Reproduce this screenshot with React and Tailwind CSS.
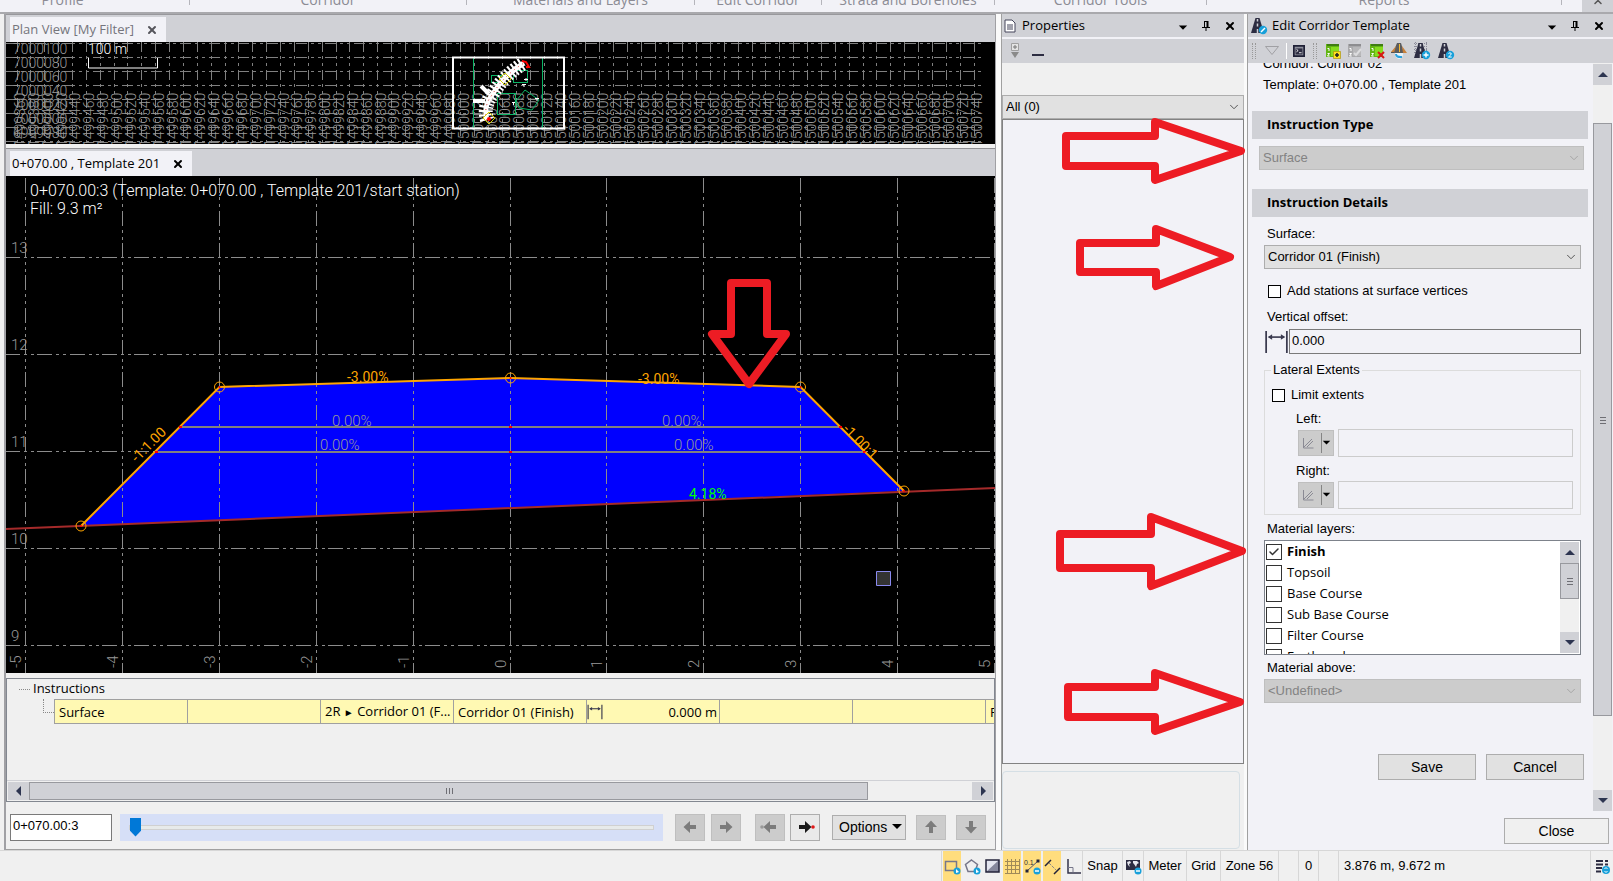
import React from 'react';
import { ChevronDown, ChevronUp, Check, X } from 'lucide-react';

const ribbonGroups = [
  { label: 'Profile', width: 'w-[254px]' },
  { label: 'Corridor', width: 'w-[277px]' },
  { label: 'Materials and Layers', width: 'w-[228px]' },
  { label: 'Edit Corridor', width: 'w-[127px]' },
  { label: 'Strata and Boreholes', width: 'w-[173px]' },
  { label: 'Corridor Tools', width: 'w-[212px]' },
  { label: 'Reports', width: 'w-[355px]' },
];

const layers = ['Finish', 'Topsoil', 'Base Course', 'Sub Base Course', 'Filter Course', 'Earthwork'];

/* ---------- Icons ---------- */

const Triangle = ({ dir = 'down', className = '' }) => {
  const shapes = {
    down: 'M1 3h10l-5 5z',
    up: 'M1 8h10l-5-5z',
    left: 'M8 1v10l-5-5z',
    right: 'M4 1v10l5-5z',
  };
  return (
    <svg viewBox="0 0 12 12" className={`w-3 h-3 shrink-0 ${className}`} fill="currentColor">
      <path d={shapes[dir]} />
    </svg>
  );
};

const PinIcon = () => (
  <svg viewBox="0 0 10 12" className="w-[10px] h-3" fill="none" stroke="#000">
    <path d="M3 1.5h4M3.5 1v6M1 7.5h8M5 8v3" />
    <path d="M6.5 1v6" strokeWidth="2" />
  </svg>
);

const RoadIcon = ({ badge, grid }) => (
  <svg viewBox="0 0 18 18" className="w-[18px] h-[18px] shrink-0">
    {grid && <path d="M1 1.500h14M1 4.500h14M1 7.500h14M1 10.500h14M2.500 0v14M13.500 0v14" stroke="#8b8b99" strokeDasharray="1 1" />}
    <path d="M5.500 1h4l4.500 15H1z" fill="#2d2d42" />
    <path d="M7.500 2v2.500M7.500 6.500v3M7.500 12v4" stroke="#d0d1d6" strokeWidth="1.500" />
    <circle cx="13" cy="13" r="4.200" fill="#18a0da" />
    {badge === 'edit' && <path d="M11 15l4-4" stroke="#fff" strokeWidth="1.500" />}
    {badge === 'plus' && <path d="M13 10.500v5M10.500 13h5" stroke="#fff" strokeWidth="1.400" />}
    {badge === 'two' && <path d="M11.500 11.500q1.500-1.500 2.800 0q.3 1-2.800 3.500h3.200" stroke="#fff" fill="none" />}
  </svg>
);

const ListIcon = ({ kind }) => {
  const off = kind === 'edit';
  return (
    <svg viewBox="0 0 16 16" className="w-4 h-4">
      <path d="M1 1h13v13H1z" fill={off ? '#a9a9ab' : '#62b512'} />
      <path d="M2 1h12v2H2z" fill={off ? '#8d8d90' : '#3f7d12'} />
      <path d="M6 4h8v9H6z" fill={off ? '#b8b8ba' : '#86dc1e'} />
      <path d="M2.500 5.500h1.500v2.500M2.500 10.500h2l-2 2.500h2.200" stroke="#fff" fill="none" />
      {kind === 'add' && (
        <>
          <path d="M8.500 8.500h7v7h-7z" fill="#ffdf20" stroke="#a58c00" strokeWidth="0.600" />
          <path d="M12 10v4M10 12h4" stroke="#222" strokeWidth="1.600" />
        </>
      )}
      {kind === 'edit' && <path d="M7 10l2 2 5-6" stroke="#dcdcde" strokeWidth="2" fill="none" />}
      {kind === 'remove' && <path d="M9 9l6 6M15 9l-6 6" stroke="#d81616" strokeWidth="2" />}
    </svg>
  );
};

const RoadTurnIcon = () => (
  <svg viewBox="0 0 16 16" className="w-4 h-4">
    <path d="M6 0h4l3 10H2z" fill="#5c5c5e" />
    <path d="M5 3L0 9l3 1zM11 3l5 7h-4z" fill="#c9803a" />
    <path d="M0 9h3v1H0z" fill="#555" />
    <path d="M8.500 1v8" stroke="#f7b92c" />
    <path d="M4 10h8v2q-1 3.500-4 4q-3-.5-4-4z" fill="#e8f4fb" />
    <path d="M5 11q0 3.500 6 3" stroke="#2aa2df" strokeWidth="2" fill="none" />
  </svg>
);

const OffsetIcon = ({ className }) => (
  <svg viewBox="0 0 22 22" className={className} fill="none" stroke="#3b3b4f">
    <path d="M1.500 1v20M20.500 1v20" strokeWidth="1.600" />
    <path d="M4 6.500h14" strokeWidth="1.500" />
    <path d="M3 6.500l4-2.500v5zM19 6.500l-4-2.500v5z" fill="#3b3b4f" stroke="none" />
  </svg>
);

const ArrowGlyph = ({ dir, dot, color = '#7c7c7c' }) => {
  const rotate = { right: 0, down: 90, left: 180, up: 270 }[dir];
  return (
    <svg viewBox="0 0 20 16" className="w-5 h-4" fill={color}>
      <g transform={`rotate(${rotate} 10 8)`}>
        <path d="M4 6h6V2l6.500 6-6.500 6v-4H4z" />
      </g>
      {dot && <circle cx={dir === 'left' ? 2 : 18} cy="8" r="1.800" fill={dot} />}
    </svg>
  );
};

const Grip = ({ vertical }) => (
  <svg viewBox="0 0 8 8" className="w-2 h-2" stroke="#6f6f75">
    {vertical ? <path d="M1 1.500h6M1 4.500h6M1 7.500h6" /> : <path d="M1.500 1v6M4.500 1v6M7.500 1v6" />}
  </svg>
);

/* ---------- Shared controls ---------- */

const SelectBox = ({ id, label, value, disabled, className = '' }) => (
  <div className={`relative h-6 ${className}`}>
    <select
      id={id}
      aria-label={label}
      disabled={disabled}
      defaultValue={value}
      className="w-full h-full appearance-none border border-[#adadad] bg-[#e1e1e1] pl-[3px] pr-6 text-black disabled:bg-[#cccccc] disabled:border-[#bfbfbf] disabled:text-[#838383] disabled:opacity-100"
    >
      <option>{value}</option>
    </select>
    <ChevronDown
      className={`absolute right-[3px] top-[5px] w-[14px] h-[14px] pointer-events-none ${disabled ? 'text-[#a0a0a0]' : 'text-[#444]'}`}
      strokeWidth={1.5}
    />
  </div>
);

const PanelHeader = ({ icon, title }) => (
  <div className="flex items-center h-[23px] shrink-0 bg-[#d0d1d6] pl-[2px] pr-2 text-[13px]">
    <span className="flex w-[18px]">{icon}</span>
    <h2 className="flex-1 ml-1 whitespace-nowrap">{title}</h2>
    <button type="button" aria-label="Panel menu" className="mr-[13px]"><Triangle className="mt-1 w-[10px]" /></button>
    <button type="button" aria-label="Pin panel" className="mr-[13px]"><PinIcon /></button>
    <button type="button" aria-label="Close panel"><X className="w-3 h-3" strokeWidth={4} /></button>
  </div>
);

const DocTab = ({ title, active, className }) => (
  <div className={`inline-flex items-center h-[25px] bg-[#f2f2f7] pl-[2px] pr-2 text-[13px] ${active ? 'text-black' : 'text-[#75757c]'} ${className}`}>
    <span className="flex-1 whitespace-nowrap">{title}</span>
    <button type="button" aria-label={`Close ${title}`}>
      <X className={`w-3 h-3 ${active ? 'text-black' : 'text-[#55555b]'}`} strokeWidth={4} />
    </button>
  </div>
);

/* ---------- Plan view ---------- */

const PlanView = () => {
  const columns = Array.from({ length: 70 }, (_, i) => 11 + i * 13.87);
  const rows = Array.from({ length: 8 }, (_, i) => 1.5 + i * 14);
  return (
    <svg className="block w-full h-[102px] shrink-0 bg-black font-['Roboto',sans-serif] font-light" fill="none">
      <g stroke="#808080" shapeRendering="crispEdges">
        {columns.map((x) => (
          <path key={x} d={`M${x} 0V102`} strokeDasharray="10 4 3 4 3 4" />
        ))}
        {rows.map((y) => (
          <path key={y} d={`M0 ${y}H979`} strokeDasharray="11 4 3 4 3 4" />
        ))}
      </g>
      <g fill="#999" fontSize="14">
        {['7000100', '7000080', '7000060', '7000040', '7000020', '7000000', '6999980'].map((label, i) => (
          <text key={label} x="7" y={12 + i * 14}>{label}</text>
        ))}
        {Array.from({ length: 70 }, (_, i) => (
          <text key={i} transform={`translate(${19 + i * 13.87} 105) rotate(-90)`}>{1499360 + i * 20}</text>
        ))}
      </g>
      <text x="82" y="12" fill="#fff" fontSize="14">100 m</text>
      <path d="M82.500 16v10h69v-10" stroke="#fff" />
      <g stroke="#0bb565" shapeRendering="crispEdges">
        <path d="M467.500 15v71M536.500 15v71" />
        <path d="M485 33h12v7h-12zM507 28h14v12h-14zM491 51h18v21h-18z" />
      </g>
      <path d="M510 59l9-11 14 10-7 10-13-2z" stroke="#0bb565" />
      <path d="M447 15.500h111v71H447z" stroke="#fff" strokeWidth="2" />
      <path d="M481 78q-4-14 5-25q12-20 32-32" stroke="#fff" strokeWidth="5" />
      <path d="M481 78q-4-14 5-25q12-20 32-32" stroke="#fff" strokeWidth="14" strokeDasharray="2 2" />
      <path d="M481 78q-4-14 5-25q12-20 32-32" stroke="#e02020" strokeDasharray="1 4" />
      <path d="M467 59h12M475 44l8 8" stroke="#fff" strokeWidth="4" />
      <path d="M499 31l6 6-6 6-6-6zM483 70l6 6-6 6-6-6z" stroke="#d6d000" />
      <path d="M516 19l4 1 3 5-3 0" stroke="#f00" strokeWidth="2" />
      <circle cx="483" cy="77" r="2" fill="#f00" />
      <path d="M520 36v3M518 37.500h4M516 42.500h4M518 42v3M506 60.500h3M507.500 60v3M529 56.500h4M531 56v3" stroke="#fff" />
    </svg>
  );
};

/* ---------- Cross section ---------- */

const CrossSection = () => {
  const columns = [19.5, 116.5, 213.5, 310.5, 407.5, 504.5, 600.5, 697.5, 794.5, 891.5, 988.5];
  const rows = [81.5, 178.5, 275.5, 372.5, 469.5];
  const nodes = [[75, 350], [213.5, 211], [504.5, 202], [794.5, 211], [898, 315]];
  return (
    <svg className="block w-full flex-1 min-h-0 bg-black font-['Roboto',sans-serif]" fill="none">
      <path d="M75 350L213.500 211 504.500 202 794.500 211 898 315z" fill="#0000ff" />
      <g stroke="#8c8c8c" shapeRendering="crispEdges">
        {columns.map((x) => (
          <path key={x} d={`M${x} 2.300V497`} strokeDasharray="15 4 3 4 3 3.330" />
        ))}
        {rows.map((y) => (
          <path key={y} d={`M-1 ${y}H989`} strokeDasharray="15 4 3 4 3 3.330" />
        ))}
      </g>
      <path d="M175 251H834M150 276H858" stroke="#808080" strokeWidth="2" />
      <path d="M0 353L989 312" stroke="#a52a2a" strokeWidth="2" />
      <path d="M75 350L213.500 211 504.500 202 794.500 211 898 315" stroke="#ffa500" strokeWidth="2" />
      {nodes.map(([x, y]) => (
        <g key={x}>
          <circle cx={x} cy={y} r="5" stroke="#ffa500" />
          <circle cx={x} cy={y} r="1" fill="#f00" />
        </g>
      ))}
      <path d="M173 251h3M149 276h3M503 251h3M503 276h3M833 251h3M857 276h3" stroke="#f00" strokeWidth="2" />

      <g fill="#999" fontSize="15" className="font-light">
        {rows.map((y, i) => (
          <text key={y} x="5" y={y - 5}>{13 - i}</text>
        ))}
        {columns.map((x, i) => (
          <text key={x} transform={`translate(${x - 5} 492) rotate(-90)`}>{i - 5}</text>
        ))}
        <text x="326" y="250">0.00%</text>
        <text x="656" y="250">0.00%</text>
        <text x="314" y="274">0.00%</text>
        <text x="668" y="274">0.00%</text>
      </g>
      <g fill="#ffa500" fontSize="14">
        <text x="341" y="206">-3.00%</text>
        <text x="632" y="208">-3.00%</text>
        <text transform="translate(131 287) rotate(-45)">-1:1.00</text>
        <text transform="translate(836 254) rotate(45)">-1.00:1</text>
      </g>
      <text x="683" y="323" fill="#00ff00" fontSize="14">4.18%</text>
      <g fill="#fff" fontSize="16" className="font-light">
        <text x="24" y="20">0+070.00:3 (Template: 0+070.00 , Template 201/start station)</text>
        <text x="24" y="38">Fill: 9.3 m²</text>
      </g>
      <path d="M870.500 395.500h14v14h-14z" fill="#333" stroke="#8a8af0" />
      <path
        d="M725 107h36v51h19L743 208 706 158h19z"
        stroke="#ed1c24"
        strokeWidth="8"
        strokeLinejoin="round"
      />
    </svg>
  );
};

/* ---------- Instruction tree ---------- */

const InstructionTree = () => (
  <div className="flex flex-col h-[124px] shrink-0 border border-[#828790] bg-[#f0f0f0] text-[13px]">
    <div className="flex items-center h-5 pl-3">
      <span className="w-[11px] border-t border-dotted border-[#888] mr-[3px]" />
      <span>Instructions</span>
    </div>
    <div className="flex pl-9 overflow-hidden">
      <span className="w-[11px] h-[14px] shrink-0 border-l border-b border-dotted border-[#888]" />
      <table className="table-fixed w-[1065px] shrink-0 border-collapse bg-[#fff9b3] leading-5">
        <tbody>
          <tr className="h-6 [&>td]:border [&>td]:border-[#a0a0a0] [&>td]:pl-1 [&>td]:pr-[2px] [&>td]:whitespace-nowrap [&>td]:overflow-hidden">
            <td>Surface</td>
            <td></td>
            <td>2R <span className="text-[10px]">►</span> Corridor 01 (F...</td>
            <td>Corridor 01 (Finish)</td>
            <td>
              <div className="flex items-center justify-between">
                <OffsetIcon className="w-4 h-4 -ml-1" />
                <span>0.000 m</span>
              </div>
            </td>
            <td></td>
            <td></td>
            <td>Finish</td>
          </tr>
        </tbody>
      </table>
    </div>
    <div className="flex mt-auto h-[21px] bg-[#f0f0f0] p-px border-t border-[#d0d1d6] text-[#2d3550]">
      <button type="button" aria-label="Scroll left" className="flex items-center justify-center w-[21px] bg-[#d0d1d6]"><Triangle dir="left" /></button>
      <div className="flex-1">
        <div className="flex items-center justify-center w-[89%] h-full border border-[#98999e] bg-[#d0d1d6]"><Grip /></div>
      </div>
      <button type="button" aria-label="Scroll right" className="flex items-center justify-center w-[21px] bg-[#d0d1d6]"><Triangle dir="right" /></button>
    </div>
  </div>
);

const navButton = "flex items-center justify-center w-[30px] shrink-0 border border-[#bfbfbf] bg-[#cccccc]";

const StationBar = () => (
  <div className="flex items-center h-12 shrink-0 pt-1 pb-[1px] pl-1 pr-[9px] border-b border-[#a0a0a0] font-['Liberation_Sans',Arial,sans-serif]">
    <input aria-label="Station" defaultValue="0+070.00:3" className="w-[102px] h-[27px] border border-[#7a7a7a] bg-white pl-[2px] pb-1 text-[13px]" />
    <div className="flex-1 flex items-center h-[27px] ml-2 mr-3 px-[9px] bg-[#d6dff7]">
      <input
        type="range"
        aria-label="Station position"
        min="0"
        max="100"
        defaultValue="0"
        className="w-full h-[5px] appearance-none bg-[#e7eaea] border border-[#d0d0d0] [&::-webkit-slider-thumb]:appearance-none [&::-webkit-slider-thumb]:w-[11px] [&::-webkit-slider-thumb]:h-[19px] [&::-webkit-slider-thumb]:bg-[#0078d7] [&::-webkit-slider-thumb]:[clip-path:polygon(0_0,100%_0,100%_70%,50%_100%,0_70%)]"
      />
    </div>
    <button type="button" disabled aria-label="Previous station" className={`${navButton} h-[27px]`}><ArrowGlyph dir="left" /></button>
    <button type="button" disabled aria-label="Next station" className={`${navButton} h-[27px] ml-[6px]`}><ArrowGlyph dir="right" /></button>
    <button type="button" disabled aria-label="Previous node" className={`${navButton} h-[27px] ml-[14px]`}><ArrowGlyph dir="left" dot="#999" /></button>
    <button type="button" aria-label="Next node" className="flex items-center justify-center w-[30px] h-[27px] ml-[5px] border border-[#adadad] bg-[#e9e9e9]"><ArrowGlyph dir="right" dot="#e01818" color="#1a1a1a" /></button>
    <button type="button" className="flex items-center justify-between w-[74px] h-[25px] ml-3 pl-[6px] pr-[2px] border border-[#adadad] bg-[#e1e1e1] text-[14px]">
      Options <Triangle />
    </button>
    <button type="button" disabled aria-label="Move up" className={`${navButton} h-[25px] ml-[10px]`}><ArrowGlyph dir="up" /></button>
    <button type="button" disabled aria-label="Move down" className={`${navButton} h-[25px] ml-[10px]`}><ArrowGlyph dir="down" /></button>
  </div>
);

/* ---------- Properties ---------- */

const PropertiesPanel = () => (
  <aside className="relative flex flex-col w-[243px] shrink-0 border-l border-[#a0a0a0] bg-[#f0f0f0]">
    <div className="[&_h2]:ml-0">
      <PanelHeader
        title="Properties"
        icon={
          <svg viewBox="0 0 12 14" className="w-3 h-[14px]" fill="#fff" stroke="#44445a">
            <path d="M1 1h7l3 3v9H1zM3 6h6M3 8h6M3 10h6" />
          </svg>
        }
      />
    </div>
    <div className="flex items-center gap-3 h-[26px] shrink-0 border-t-2 border-[#f2f2f7] bg-[#d0d1d6] pl-2">
      <svg viewBox="0 0 10 18" className="w-[10px] h-[18px]">
        <path d="M1.500 1.500h7v7h-7z" fill="#e4e4e4" stroke="#a0a0a0" />
        <path d="M5 3v4M3 5h4" stroke="#777" />
        <path d="M1 10h8l-4 6z" fill="#8a8a8a" />
      </svg>
      <span className="w-3 h-[2px] mt-2 bg-[#2d2d42]" />
    </div>
    <SelectBox label="Selected objects" value="All (0)" className="mt-8 font-['Liberation_Sans',Arial,sans-serif] text-[13px]" />
    <div className="flex-1 border border-[#828282] bg-[#f2f2f7]" />
    <div className="h-[78px] shrink-0 mt-[7px] mb-px mr-1 rounded border border-[#d5dfe5]" />

    {/* Callout arrows pointing into the template panel */}
    <svg className="absolute inset-0 w-full h-full overflow-visible pointer-events-none z-10" fill="none" stroke="#ed1c24" strokeWidth="8" strokeLinejoin="round">
      <path d="M64 122h89v-14l86 29-86 29v-14H64z" />
      <path d="M78 229h76v-14l74 28-74 29v-14H78z" />
      <path d="M58 520h91v-17l91 34-91 35v-18H58z" />
      <path d="M66 673h87v-14l85 29-85 29v-14H66z" />
    </svg>
  </aside>
);

/* ---------- Edit corridor template ---------- */

const SectionTitle = ({ children, className = '' }) => (
  <h3 className={`flex items-center h-7 pl-[15px] mr-1 bg-[#d0d1d6] font-bold font-['Open_Sans',sans-serif] text-[13px] ${className}`}>
    {children}
  </h3>
);

const ExtentRow = ({ id, label, className = '' }) => (
  <div className={`pl-[31px] pr-[7px] ${className}`}>
    <label htmlFor={id} className="block leading-5">{label}</label>
    <div className="flex items-center gap-1 h-7 ml-[2px]">
      <button type="button" disabled aria-label={`${label} point options`} className="flex items-center justify-between w-9 h-[26px] shrink-0 border border-[#bfbfbf] bg-[#cccccc] pl-[3px] pr-[2px]">
        <svg viewBox="0 0 12 12" className="w-3 h-3" fill="none" stroke="#8a8a94">
          <path d="M1.500 1v10h10M2 10l8-8M5 10l6-6" />
        </svg>
        <span className="flex items-center border-l border-[#858585] h-5 text-black"><Triangle className="w-[9px]" /></span>
      </button>
      <input id={id} disabled className="flex-1 min-w-0 h-7 border border-[#cccccc] bg-[#f2f2f7]" />
    </div>
  </div>
);

const MaterialLayers = () => (
  <div className="flex h-[115px] border border-[#7d828b] bg-white overflow-hidden">
    <ul className="flex-1 pl-px font-['Open_Sans',sans-serif] overflow-hidden">
      {layers.map((name, i) => (
        <li key={name} className="h-[21px]">
          <label className={`flex items-center h-full ${i === 0 ? 'font-bold' : ''}`}>
            <span className="relative w-4 h-4 mr-[5px]">
              <input type="checkbox" defaultChecked={i === 0} className="peer block w-4 h-4 appearance-none border border-[#333] bg-white" />
              <Check className="absolute inset-0 w-4 h-4 p-[2px] text-[#333] opacity-0 peer-checked:opacity-100" strokeWidth={3} />
            </span>
            {name}
          </label>
        </li>
      ))}
    </ul>
    <div className="flex flex-col w-[19px] mr-px my-px bg-[#f0f0f0] text-[#2d3550]">
      <button type="button" aria-label="Scroll layers up" className="flex items-center justify-center h-[21px] bg-[#d0d1d6]"><Triangle dir="up" /></button>
      <div className="flex items-center justify-center h-9 border border-[#98999e] bg-[#d0d1d6]"><Grip vertical /></div>
      <button type="button" aria-label="Scroll layers down" className="flex items-center justify-center h-[21px] mt-auto bg-[#d0d1d6]"><Triangle /></button>
    </div>
  </div>
);

const formButton = 'border border-[#adadad] bg-[#e1e1e1] h-[26px] w-[98px] text-[14px]';

const TemplateForm = () => (
  <form className="flex-1 min-w-0 pl-1 overflow-hidden">
    <p className="pl-[11px] -mt-[10px] leading-[21px]">Corridor: Corridor 02</p>
    <p className="pl-[11px] leading-[21px]">Template: 0+070.00 , Template 201</p>
    <SectionTitle className="mt-4">Instruction Type</SectionTitle>
    <SelectBox label="Instruction type" value="Surface" disabled className="mt-[7px] ml-[7px] mr-2" />
    <SectionTitle className="mt-[19px]">Instruction Details</SectionTitle>

    <div className="pl-3 pr-[11px]">
      <label htmlFor="surface" className="block mt-[7px] pl-[3px] leading-5">Surface:</label>
      <SelectBox id="surface" value="Corridor 01 (Finish)" className="mt-px" />
      <label className="flex items-center h-5 mt-3 pl-1">
        <input type="checkbox" className="w-[13px] h-[13px] mr-[6px] appearance-none border border-black bg-white" />
        Add stations at surface vertices
      </label>
      <label htmlFor="offset" className="block mt-[6px] pl-[3px] leading-5">Vertical offset:</label>
      <div className="flex items-center h-[25px] mt-[2px]">
        <OffsetIcon className="w-[25px] h-6" />
        <input id="offset" defaultValue="0.000" className="flex-1 min-w-0 h-[25px] border border-[#7a7a7a] bg-[#f2f2f7] pl-[2px] pb-[3px]" />
      </div>

      <fieldset className="mt-[6px] pb-[5px] border border-[#dcdcdc] min-w-0">
        <legend className="ml-[6px] px-[2px] leading-5">Lateral Extents</legend>
        <label className="flex items-center h-5 mt-[5px] pl-[7px]">
          <input type="checkbox" className="w-[13px] h-[13px] mr-[6px] appearance-none border border-black bg-white" />
          Limit extents
        </label>
        <ExtentRow id="extent-left" label="Left:" className="mt-1" />
        <ExtentRow id="extent-right" label="Right:" className="mt-1" />
      </fieldset>

      <p className="mt-1 mb-px pl-[3px] leading-5">Material layers:</p>
      <MaterialLayers />
      <label htmlFor="material-above" className="block mt-[3px] pl-[3px] leading-5">Material above:</label>
      <SelectBox id="material-above" value="<Undefined>" disabled className="mt-px" />
    </div>
    <div className="flex justify-end gap-[10px] mt-[51px] pr-2">
      <button type="button" className={formButton}>Save</button>
      <button type="button" className={formButton}>Cancel</button>
    </div>
  </form>
);

const TemplatePanel = () => (
  <aside className="flex flex-col w-[366px] shrink-0 border-l border-[#a0a0a0] bg-[#f2f2f7]">
    <PanelHeader title="Edit Corridor Template" icon={<RoadIcon badge="edit" />} />
    <div className="flex items-center h-[26px] shrink-0 border-t-2 border-[#f2f2f7] bg-[#d0d1d6] pl-1">
      <span className="w-1 h-4 border-x border-dotted border-[#999]" />
      <svg viewBox="0 0 16 12" className="w-4 h-3 ml-2" fill="none" stroke="#a0a0a4"><path d="M1.500 1.500h13L8 9.500z" /></svg>
      <span className="w-px h-4 ml-[6px] bg-white" />
      <svg viewBox="0 0 14 14" className="w-3 h-3 ml-[6px]">
        <path d="M1 1h12v12H1z" fill="#8e909c" stroke="#1f2036" strokeWidth="2" />
        <path d="M3 4h8v7H3z" fill="#2d2d42" />
        <path d="M4 5l2 1.500L4 8M7 9h3" stroke="#fff" fill="none" />
      </svg>
      <span className="w-1 h-4 mx-2 border-x border-dotted border-[#999]" />
      <div className="flex items-center gap-[6px]">
        <button type="button" aria-label="Add instruction"><ListIcon kind="add" /></button>
        <button type="button" aria-label="Edit instruction"><ListIcon kind="edit" /></button>
        <button type="button" aria-label="Remove instruction"><ListIcon kind="remove" /></button>
        <button type="button" aria-label="Superelevation"><RoadTurnIcon /></button>
        <button type="button" aria-label="Add template"><RoadIcon badge="plus" grid /></button>
        <button type="button" aria-label="Copy template"><RoadIcon badge="two" /></button>
      </div>
    </div>
    <div className="flex flex-1 min-h-0 font-['Liberation_Sans',Arial,sans-serif] text-[13px]">
      <TemplateForm />
      <div className="flex flex-col w-[19px] mr-px ml-[1px] pt-px bg-[#f0f0f0] text-[#2d3550]">
        <button type="button" aria-label="Scroll up" className="flex items-center justify-center h-[21px] bg-[#d0d1d6]"><Triangle dir="up" /></button>
        <div className="flex-1 flex flex-col pt-[38px] pb-[74px]">
          <div className="flex-1 flex items-center justify-center border border-[#98999e] bg-[#d0d1d6]"><Grip vertical /></div>
        </div>
        <button type="button" aria-label="Scroll down" className="flex items-center justify-center h-[21px] bg-[#d0d1d6]"><Triangle /></button>
      </div>
    </div>
    <div className="flex justify-end shrink-0 h-[39px] pt-[7px] pr-1 font-['Liberation_Sans',Arial,sans-serif]">
      <button type="button" className="w-[105px] h-[26px] border border-[#adadad] bg-[#f0f0f0] text-[14px]">Close</button>
    </div>
  </aside>
);

/* ---------- Status bar ---------- */

const statusIcon = 'flex items-center justify-center h-full w-[18px]';
const statusCell = 'flex items-center justify-center h-full border-l border-[#d7d7d7] whitespace-nowrap';

const Badge = () => <circle cx="13" cy="13" r="3.500" fill="#18a0da" />;

const StatusBar = () => (
  <footer className="flex items-center h-[31px] shrink-0 border-t border-[#d7d7d7] bg-[#f0f0f0] font-['Liberation_Sans',Arial,sans-serif] text-[13px]">
    <div className="flex items-center h-full w-[141px] ml-auto border-l border-[#d7d7d7] pl-px gap-[2px]">
      <button type="button" aria-label="Rectangle select" className={`${statusIcon} bg-[#ffdd7d]`}>
        <svg viewBox="0 0 17 17" className="w-[17px] h-[17px]" fill="none"><path d="M1.500 3.500h11v9h-11z" stroke="#77778a" strokeWidth="1.500" /><Badge /><path d="M12 11v4l3-1z" fill="#fff" /></svg>
      </button>
      <button type="button" aria-label="Polygon select" className={statusIcon}>
        <svg viewBox="0 0 17 17" className="w-[17px] h-[17px]" fill="none"><path d="M7.500 2l6 4.500-2.500 7H4L1.500 6.500z" stroke="#77778a" strokeWidth="1.500" /><Badge /><path d="M12 11v4l3-1z" fill="#fff" /></svg>
      </button>
      <button type="button" aria-label="Background" className={statusIcon}>
        <svg viewBox="0 0 17 17" className="w-[17px] h-[17px]"><path d="M2 2h13v12H2z" fill="#e4e6f0" /><path d="M15 2v12H2z" fill="#85879c" /><path d="M2 2h13v12H2z" fill="none" stroke="#23233a" strokeWidth="1.500" /></svg>
      </button>
      <button type="button" aria-label="Grid lines" className={`${statusIcon} bg-[#ffdd7d]`}>
        <svg viewBox="0 0 17 17" className="w-[17px] h-[17px]" stroke="#a08a58"><path d="M1 3.500h15M1 7.500h15M1 11.500h15M1 15.500h15M3.500 1v15M7.500 1v15M11.500 1v15M15.500 1v15" /></svg>
      </button>
      <button type="button" aria-label="Labels" className={`${statusIcon} bg-[#ffdd7d]`}>
        <svg viewBox="0 0 17 17" className="w-[17px] h-[17px]"><path d="M3 13L14 3" stroke="#55556a" /><path d="M1.500 11.500h3v3h-3zM12.500 1.500h3v3h-3z" fill="#23233a" /><text x="0" y="7" fontSize="7" fill="#333">0.1</text><Badge /><path d="M11 13h4" stroke="#fff" strokeWidth="1.500" /></svg>
      </button>
      <button type="button" aria-label="Line marks" className={`${statusIcon} bg-[#ffdd7d]`}>
        <svg viewBox="0 0 17 17" className="w-[17px] h-[17px]" fill="none"><path d="M1 8l6-6M10 16l6-6" stroke="#23233a" strokeWidth="1.500" /><path d="M5 5l7 7" stroke="#888" strokeDasharray="3 1" /></svg>
      </button>
      <button type="button" aria-label="Ortho" className={statusIcon}>
        <svg viewBox="0 0 17 17" className="w-[17px] h-[17px]" fill="none"><path d="M4 1v14h13" stroke="#33334a" strokeWidth="1.500" /><path d="M4 9.500h5v5" stroke="#77778a" /></svg>
      </button>
    </div>
    <div className={`${statusCell} w-10`}>Snap</div>
    <div className={`${statusCell} w-[21px]`}>
      <svg viewBox="0 0 17 17" className="w-[17px] h-[17px]"><path d="M1 2h14v10H1z" fill="#2d2d42" /><path d="M2 4l3-1 1 2-2 1 1 3-2-2zM8 3l4 0 2 2-2 1-1 3-2-3-1-1z" fill="#e8e8ee" /><Badge /><path d="M11 13h4" stroke="#fff" strokeWidth="1.500" /></svg>
    </div>
    <div className={`${statusCell} w-[43px]`}>Meter</div>
    <div className={`${statusCell} w-[34px]`}>Grid</div>
    <div className={`${statusCell} w-[58px]`}>Zone 56</div>
    <div className={`${statusCell} w-5`} />
    <div className={`${statusCell} w-5`}>0</div>
    <div className={`${statusCell} w-5`} />
    <div className="flex items-center h-full w-[252px] border-l border-[#d7d7d7] pl-[5px]">3.876 m, 9.672 m</div>
    <div className={`${statusCell} w-[23px]`}>
      <svg viewBox="0 0 15 15" className="w-[15px] h-[15px]" fill="none" stroke="#2d2d42" strokeWidth="2"><path d="M1 2h7M1 5.500h7M1 9h6M1 12.500h5M10 2h3M10 5.500h3" /><circle cx="11" cy="11" r="4" fill="#18a0da" stroke="none" /><path d="M9.500 10L11 8.500l1.500 1.500M9.500 12l1.500 1.500 1.500-1.500" stroke="#fff" strokeWidth="1" /></svg>
    </div>
  </footer>
);

const App = () => (
  <div className="flex flex-col h-screen overflow-hidden bg-[#f0f0f0] text-black font-['Open_Sans',sans-serif]">
    {/* Ribbon group captions */}
    <div className="flex h-[14px] shrink-0 overflow-hidden border-b-2 border-[#a9a9ad] bg-[#f2f2f7] text-[14px] text-[#8b8b94]">
      <div className="flex flex-1 -ml-16">
        {ribbonGroups.map((group) => (
          <div key={group.label} className={`${group.width} h-[5px] shrink-0 flex items-end justify-center border-r border-[#b5b5bb] leading-[10px] whitespace-nowrap`}>
            {group.label}
          </div>
        ))}
      </div>
      <button type="button" aria-label="Collapse ribbon" className="flex items-center justify-center w-[31px] bg-[#d0d1d6]">
        <ChevronUp className="w-3 h-3 text-[#555] -mt-2" strokeWidth={3} />
      </button>
    </div>

    <div className="flex flex-1 min-h-0">
      <main className="flex flex-col flex-1 min-w-0 ml-1 border-l-2 border-r border-[#a0a0a4]">
        <div className="h-7 shrink-0 bg-[#d0d1d6] border-t border-[#98989c] pl-1">
          <DocTab title="Plan View [My Filter]" className="w-[156px] mt-[2px]" />
        </div>
        <PlanView />
        <div className="h-[5px] shrink-0 bg-[#f0f0f0] border-b border-[#909094]" />
        <div className="h-[27px] shrink-0 bg-[#d0d1d6] pl-1">
          <DocTab title="0+070.00 , Template 201" active className="w-[182px] mt-[2px]" />
        </div>
        <CrossSection />
        <div className="h-[5px] shrink-0" />
        <InstructionTree />
        <StationBar />
      </main>
      <div className="w-[5px] shrink-0 bg-[#fafafa]" />
      <PropertiesPanel />
      <div className="w-[3px] shrink-0 bg-[#fafafa]" />
      <TemplatePanel />
    </div>

    <StatusBar />
  </div>
);

export default App;
